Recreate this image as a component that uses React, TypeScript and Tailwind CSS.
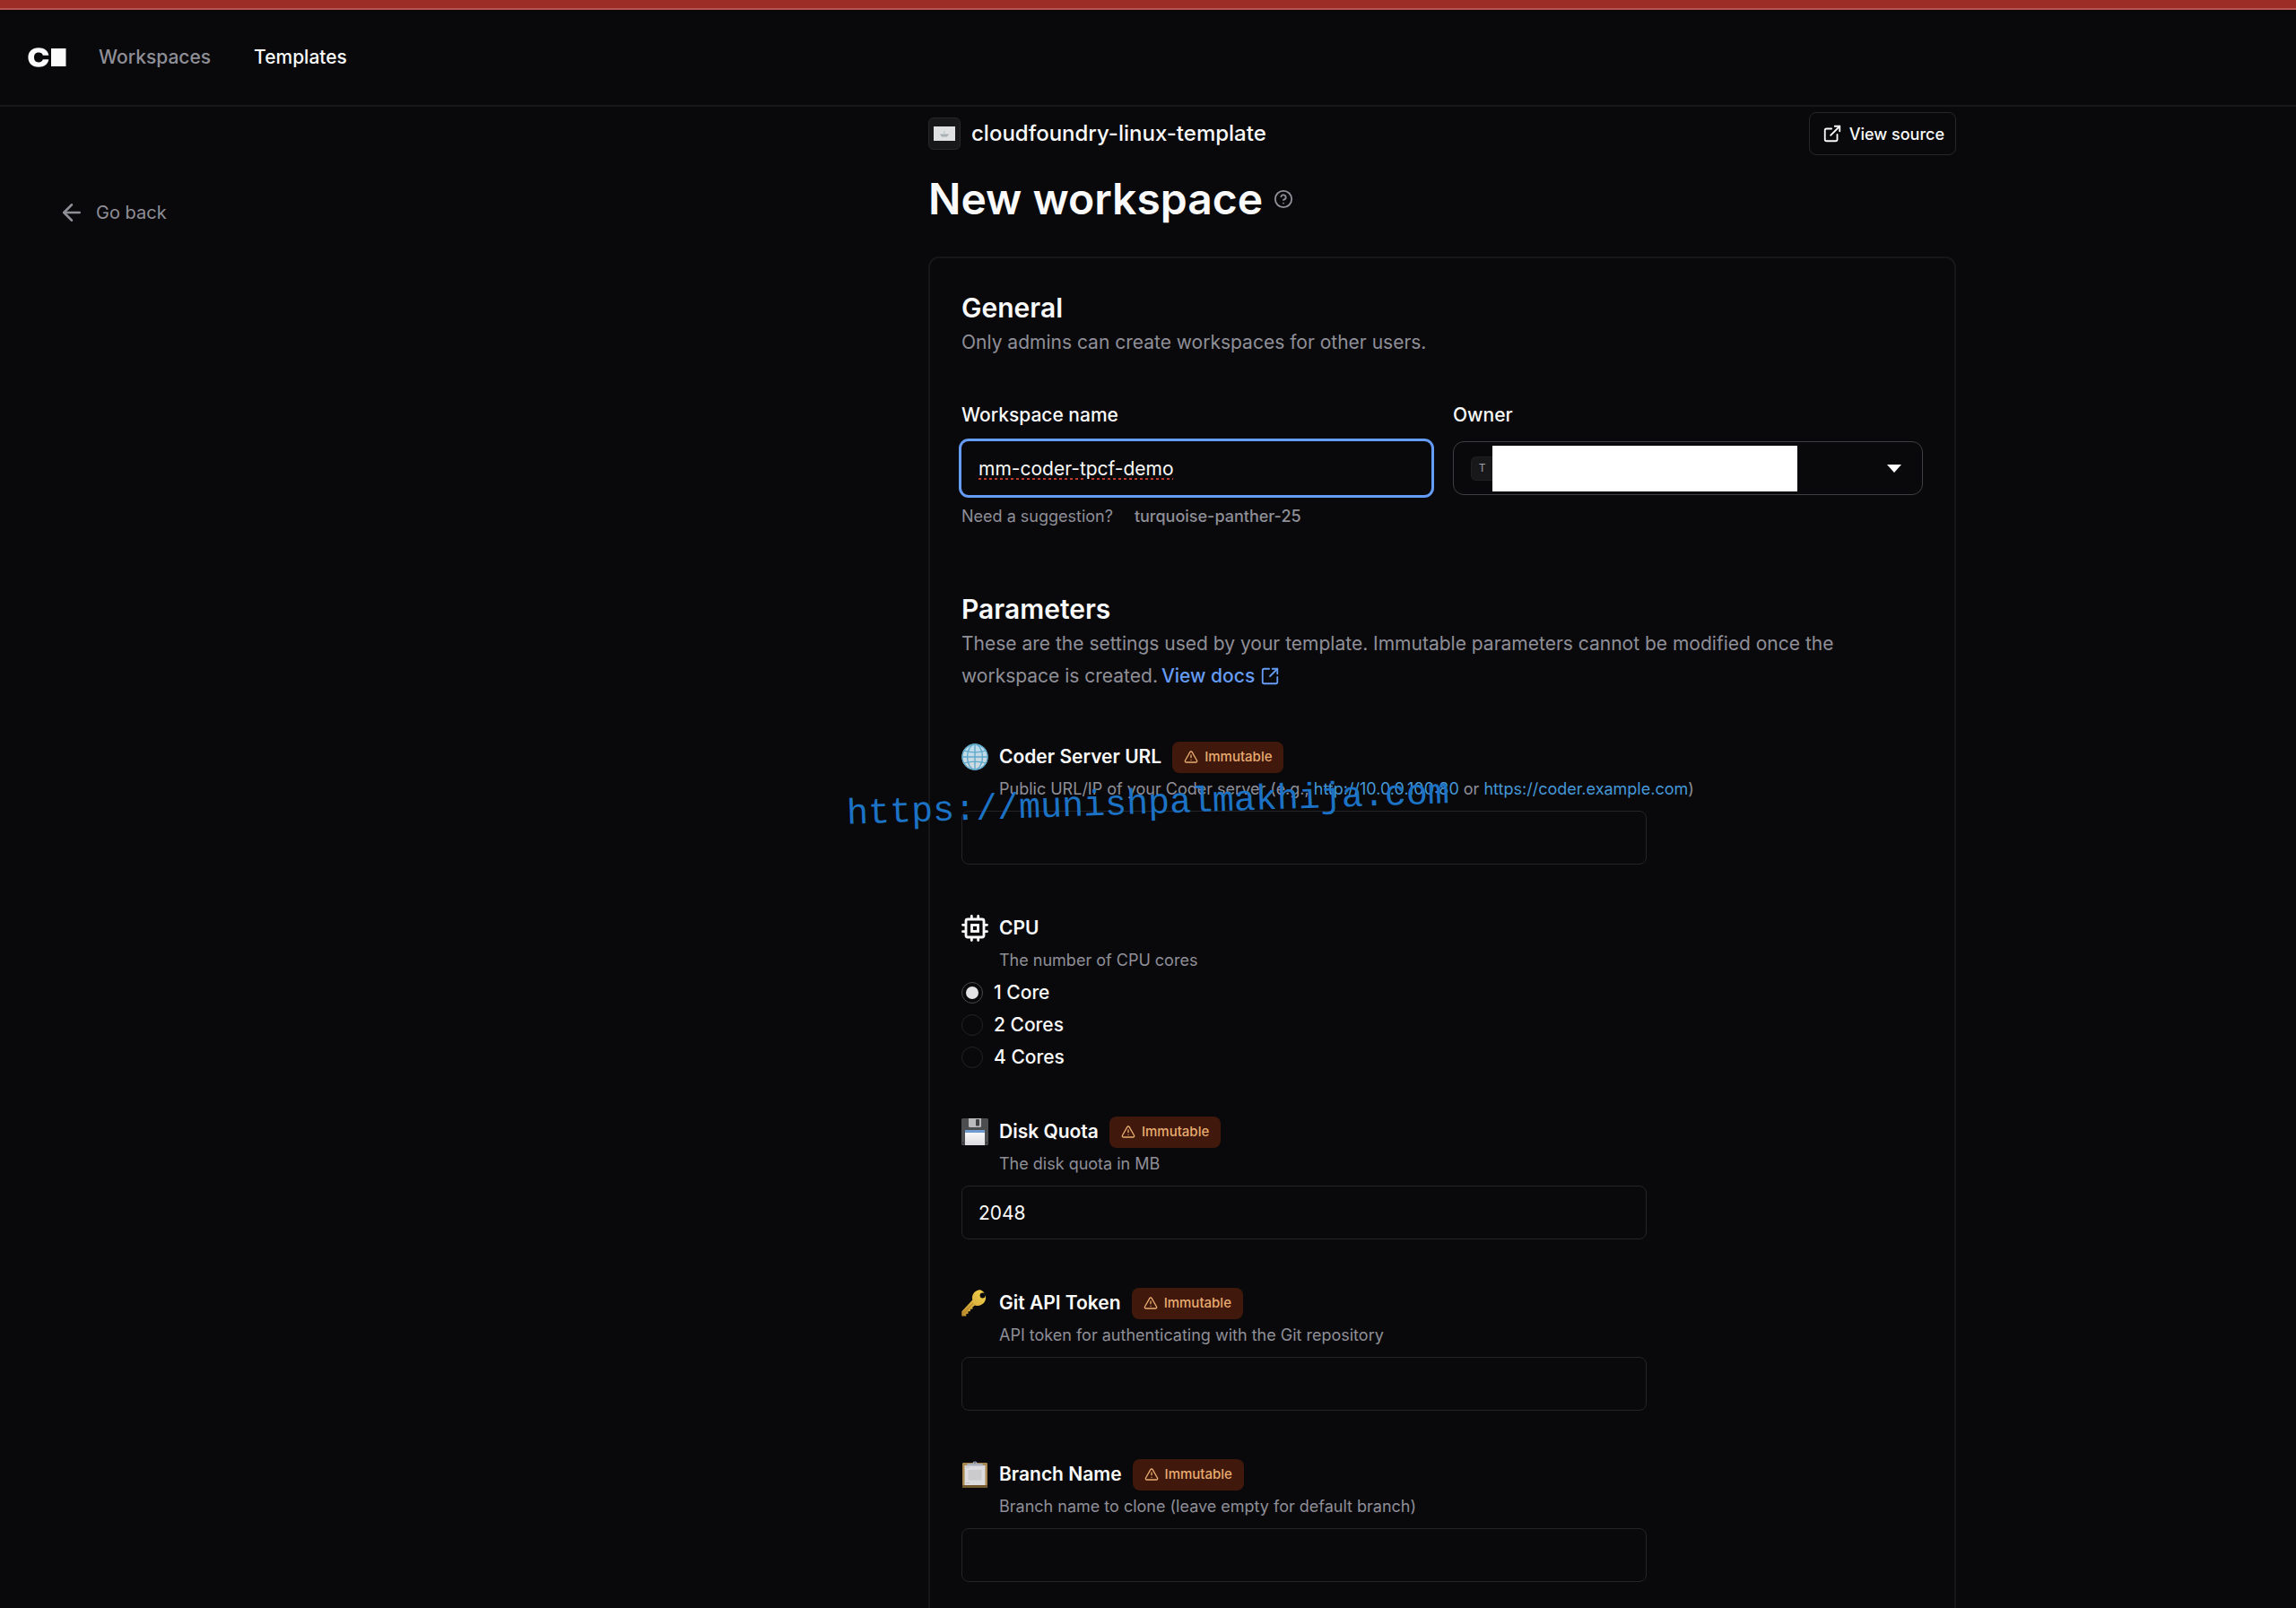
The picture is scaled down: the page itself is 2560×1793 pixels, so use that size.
import { useState } from 'react';
import type { ReactNode } from 'react';
import {
  ArrowLeft,
  CircleHelp,
  ExternalLink,
  SquareArrowOutUpRight,
  TriangleAlert,
} from 'lucide-react';

const CORES = ['1 Core', '2 Cores', '4 Cores'];

function Logo() {
  return (
    <svg width="44" height="22" viewBox="0 0 44 22" fill="#fafafa" aria-label="Coder">
      <path d="M23.3 8.7C22.6 3.4 18.3.3 12 .3 4.8.3.4 4.7.4 11S4.8 21.7 12 21.7c6.300 0 10.600-3.200 11.300-8.500h-6.500c-.5 2-2.200 3.200-4.700 3.200-3.400 0-5.100-2.200-5.100-5.400s1.700-5.400 5.100-5.400c2.500 0 4.200 1.100 4.700 3.100z" />
      <path d="M26 1h16.500v20H26z" />
    </svg>
  );
}

function GlobeIcon() {
  return (
    <svg width="30" height="30" viewBox="0 0 30 30" fill="none">
      <defs>
        <linearGradient id="globe" x1="0" y1="0" x2="0" y2="1">
          <stop offset="0" stopColor="#b9dcec" />
          <stop offset="1" stopColor="#d3d8de" />
        </linearGradient>
      </defs>
      <circle cx="15" cy="15" r="14.5" fill="url(#globe)" />
      <g stroke="#5fa9cb" strokeWidth="1.4">
        <circle cx="15" cy="15" r="14" />
        <ellipse cx="15" cy="15" rx="8.500" ry="14" />
        <path d="M15 1v28M1 15h28M3 8.200c7 2 17 2 24 0M3 21.800c7-2 17-2 24 0" />
      </g>
    </svg>
  );
}

function CpuIcon() {
  return (
    <svg width="30" height="30" viewBox="3 3 18 18" fill="none" stroke="#fafafa" strokeWidth="1.700" strokeLinecap="round">
      <rect x="6" y="6" width="12" height="12" rx="1.200" />
      <rect x="9.900" y="9.900" width="4.200" height="4.200" />
      <path d="M9.800 3.900v1.500M14.200 3.900v1.500M9.800 18.600v1.500M14.200 18.600v1.500M3.900 9.800h1.500M3.900 14.200h1.500M18.600 9.800h1.500M18.600 14.200h1.500" />
    </svg>
  );
}

function FloppyIcon() {
  return (
    <svg width="30" height="30" viewBox="0 0 30 30">
      <defs>
        <linearGradient id="floppyLabel" x1="0" y1="0" x2="0" y2="1">
          <stop offset="0" stopColor="#fdfdfd" />
          <stop offset="1" stopColor="#dcdce0" />
        </linearGradient>
      </defs>
      <path d="M1 0h28l1 1v28l-1 1H1l-1-1V1z" fill="#4c4d4f" />
      <path d="M8 0h14v8.500a1.500 1.500 0 0 1-1.500 1.500h-11A1.500 1.500 0 0 1 8 8.500z" fill="#b9babc" />
      <rect x="16" y="1" width="4" height="7.500" rx=".8" fill="#3f4042" />
      <path d="M4 13h22v17H4z" fill="url(#floppyLabel)" />
      <path d="M4 13h22v3H4z" fill="#6f9bd1" />
      <path d="M1 26.500h1.500v1.500H1zM27.500 26.500H29v1.500h-1.500z" fill="#2a2b2c" />
    </svg>
  );
}

function KeyIcon() {
  return (
    <svg width="30" height="30" viewBox="0 0 30 30">
      <defs>
        <linearGradient id="key" x1="1" y1="0" x2="0" y2="1">
          <stop offset="0" stopColor="#f3d34a" />
          <stop offset=".55" stopColor="#d9b03e" />
          <stop offset="1" stopColor="#b98a2c" />
        </linearGradient>
      </defs>
      <path
        fillRule="evenodd"
        fill="url(#key)"
        d="M21 .3a8.800 8.800 0 0 0-8.700 11.200L.3 24.300V29.600h5v-2.600h2.200v-2.700h2.500v-2.500h2.400v-2.300l2.600-2A8.900 8.900 0 1 0 21 .3zm2.600 3.200a3 3 0 1 1 0 6 3 3 0 0 1 0-6z"
      />
      <path d="M2.300 26.500 13.200 15" stroke="#a87c27" strokeWidth="1" />
    </svg>
  );
}

function ClipboardIcon() {
  return (
    <svg width="30" height="30" viewBox="0 0 30 30">
      <rect x="1" y="2" width="28" height="28" rx="1.200" fill="#a8874f" />
      <path d="M1 27h28v2a1 1 0 0 1-1 1H2a1 1 0 0 1-1-1z" fill="#73572c" />
      <path d="M3.500 5h23v22h-23z" fill="#dcdcde" />
      <path d="M7.500 10h15v11.500h-15z" fill="#cbcbce" />
      <path d="M5 7h4M5 24.500h4" stroke="#b6b6ba" strokeWidth=".8" />
      <path d="M5 5.500 7 3h5.500a2.500 2.500 0 0 1 5 0H23l2 2.500z" fill="#a9b0ba" />
      <circle cx="15" cy="2" r="1" fill="#6f7782" />
    </svg>
  );
}

function ImmutableBadge() {
  return (
    <span className="flex h-[35px] items-center gap-[7px] rounded-lg bg-[#40180c] px-[13px] text-[15px] font-medium text-[#e8ac70]">
      <TriangleAlert size={16} strokeWidth={2} />
      Immutable
    </span>
  );
}

type FieldHeaderProps = {
  icon: ReactNode;
  title: string;
  htmlFor?: string;
  immutable?: boolean;
  children: ReactNode;
};

function FieldHeader({ icon, title, htmlFor, immutable, children }: FieldHeaderProps) {
  return (
    <div className="flex gap-3">
      <div className="flex h-9 items-center">{icon}</div>
      <div>
        <div className="flex h-9 items-center gap-3">
          <label htmlFor={htmlFor} className="text-[21px] font-semibold">
            {title}
          </label>
          {immutable && <ImmutableBadge />}
        </div>
        <p className="text-[18px] leading-9 text-[#8f8f98]">{children}</p>
      </div>
    </div>
  );
}

type TextFieldProps = FieldHeaderProps & { id: string; defaultValue?: string };

function TextField({ id, defaultValue = '', ...header }: TextFieldProps) {
  return (
    <div className="flex flex-col gap-[6px]">
      <FieldHeader {...header} htmlFor={id} />
      <input
        id={id}
        type="text"
        defaultValue={defaultValue}
        className="h-[60px] w-full max-w-[764px] rounded-lg border border-[#242427] bg-transparent px-[18px] text-[21px] outline-none"
      />
    </div>
  );
}

export default function App() {
  const [cores, setCores] = useState(CORES[0]);
  const [name, setName] = useState('mm-coder-tpcf-demo');

  return (
    <div className="relative flex min-h-screen flex-col bg-[#09090b] font-['Inter',sans-serif] text-[#fafafa]">
      <div className="h-[11px] border-b-2 border-[#b55450] bg-[#9b2c26]" />
      <nav className="flex h-[108px] items-center border-b-2 border-[#17171a] px-[31px] text-[21px] font-medium">
        <a href="#" className="mr-[35px]">
          <Logo />
        </a>
        <a href="#workspaces" className="mr-12 text-[#8f8f98]">
          Workspaces
        </a>
        <a href="#templates">Templates</a>
      </nav>

      <div className="grid flex-1 grid-cols-[1035fr_1146fr_379fr]">
        <aside className="pt-[100px] pl-[65px]">
          <button type="button" className="flex h-9 items-center gap-3 text-[20px] text-[#8f8f98]">
            <ArrowLeft size={30} strokeWidth={2} />
            Go back
          </button>
        </aside>

        <main className="flex flex-col pt-[6px]">
          <div className="flex h-12 items-center justify-between">
            <div className="flex items-center gap-3 text-[24px] font-medium">
              <span className="flex size-9 items-center justify-center rounded-md border border-[#27272a] bg-[#18181b]">
                <svg width="24" height="16" viewBox="0 0 24 16">
                  <path d="M0 0h24v16H0z" fill="#dfe1e2" />
                  <path d="M7 8.500h10l-2 3H9z" fill="#a9afb2" />
                  <path d="M11 5h2v3h-2z" fill="#c3d4d2" />
                </svg>
              </span>
              cloudfoundry-linux-template
            </div>
            <button
              type="button"
              className="flex h-12 items-center gap-2 rounded-lg border border-[#27272a] pr-3 pl-[14px] text-[18px] font-medium">
              <ExternalLink size={22} strokeWidth={2} />
              View source
            </button>
          </div>

          <div className="mt-[19px] flex items-center gap-3">
            <h1 className="text-[48px] leading-[60px] font-semibold">New workspace</h1>
            <CircleHelp size={22} className="text-[#8f8f98]" />
          </div>

          <form className="mt-[34px] flex-1 rounded-t-xl border-2 border-b-0 border-[#171719] px-[35px] pt-[37px] pb-4">
            <h2 className="text-[30px] leading-9 font-semibold">General</h2>
            <p className="mt-[3px] text-[21px] leading-9 text-[#8f8f98]">
              Only admins can create workspaces for other users.
            </p>

            <div className="mt-12 grid grid-cols-2 gap-6">
              <div>
                <label htmlFor="name" className="block text-[21px] leading-[30px] font-medium">
                  Workspace name
                </label>
                <input
                  id="name"
                  type="text"
                  spellCheck={false}
                  value={name}
                  onChange={(e) => setName(e.target.value)}
                  className="mt-[14px] h-[60px] w-full rounded-lg bg-transparent px-[19px] text-[21px] underline decoration-[#c0392f] decoration-dotted decoration-3 underline-offset-3 ring-3 ring-[#659cf5] outline-none"
                />
                <div className="mt-[10px] flex gap-6 text-[18px] leading-7 text-[#8f8f98]">
                  <span>Need a suggestion?</span>
                  <button type="button" className="font-medium" onClick={() => setName('turquoise-panther-25')}>
                    turquoise-panther-25
                  </button>
                </div>
              </div>
              <div>
                <label htmlFor="owner" className="block text-[21px] leading-[30px] font-medium">
                  Owner
                </label>
                <div className="relative mt-[14px]">
                  <select
                    id="owner"
                    className="block h-[60px] w-full appearance-none rounded-xl border border-[#3f3f43] bg-transparent outline-none">
                    <option value="owner" aria-label="Owner" />
                  </select>
                  <div className="pointer-events-none absolute inset-0 flex items-center justify-between pr-6 pl-5">
                    <div className="flex items-center">
                      <span className="flex h-[27px] w-6 items-center justify-center rounded-l-md border border-r-0 border-[#202023] bg-[#18181b] text-[12px] text-[#a1a1aa]">
                        T
                      </span>
                      <span className="h-[51px] w-[340px] bg-white" />
                    </div>
                    <svg width="16" height="9" viewBox="0 0 16 9" fill="#fff">
                      <path d="M0 0h16L8 9z" />
                    </svg>
                  </div>
                </div>
              </div>
            </div>

            <h2 className="mt-[71px] text-[30px] leading-9 font-semibold">Parameters</h2>
            <p className="mt-[3px] max-w-[1000px] text-[21px] leading-9 text-[#8f8f98]">
              These are the settings used by your template. Immutable parameters cannot be modified once the
              workspace is created.
              <a href="#docs" className="ml-1 inline-flex items-center gap-[6px] align-top font-medium text-[#659cf5]">
                View docs
                <SquareArrowOutUpRight size={22} strokeWidth={2} />
              </a>
            </p>

            <div className="mt-[54px] flex flex-col gap-[53px]">
              <TextField id="url" icon={<GlobeIcon />} title="Coder Server URL" immutable>
                Public URL/IP of your Coder server (e.g.,{' '}
                <a href="#ip" className="text-[#4598d8]">
                  http://10.0.0.100:80
                </a>{' '}
                or{' '}
                <a href="#host" className="text-[#4598d8]">
                  https://coder.example.com
                </a>
                )
              </TextField>

              <div className="flex flex-col gap-[6px]">
                <FieldHeader icon={<CpuIcon />} title="CPU">
                  The number of CPU cores
                </FieldHeader>
                <div role="radiogroup" aria-label="CPU" className="flex flex-col gap-3">
                  {CORES.map((core) => (
                    <label key={core} className="flex h-6 items-center gap-3 text-[21px] font-medium">
                      <input
                        type="radio"
                        name="cores"
                        checked={cores === core}
                        onChange={() => setCores(core)}
                        className="grid size-6 appearance-none place-items-center rounded-full border border-[#232326] before:size-[14px] before:rounded-full before:content-[''] checked:border-[#48484c] checked:before:bg-[#e4e4e7]"
                      />
                      {core}
                    </label>
                  ))}
                </div>
              </div>

              <TextField id="disk" icon={<FloppyIcon />} title="Disk Quota" defaultValue="2048" immutable>
                The disk quota in MB
              </TextField>
              <TextField id="token" icon={<KeyIcon />} title="Git API Token" immutable>
                API token for authenticating with the Git repository
              </TextField>
              <TextField id="branch" icon={<ClipboardIcon />} title="Branch Name" immutable>
                Branch name to clone (leave empty for default branch)
              </TextField>
            </div>
          </form>
        </main>
      </div>

      {/* watermark */}
      <div className="pointer-events-none absolute inset-0 flex items-center justify-center">
        <span className="-rotate-2 font-['Courier_New','Liberation_Mono',monospace] text-[40px] text-[#1c72c4]">
          https://munishpalmakhija.com
        </span>
      </div>
    </div>
  );
}
